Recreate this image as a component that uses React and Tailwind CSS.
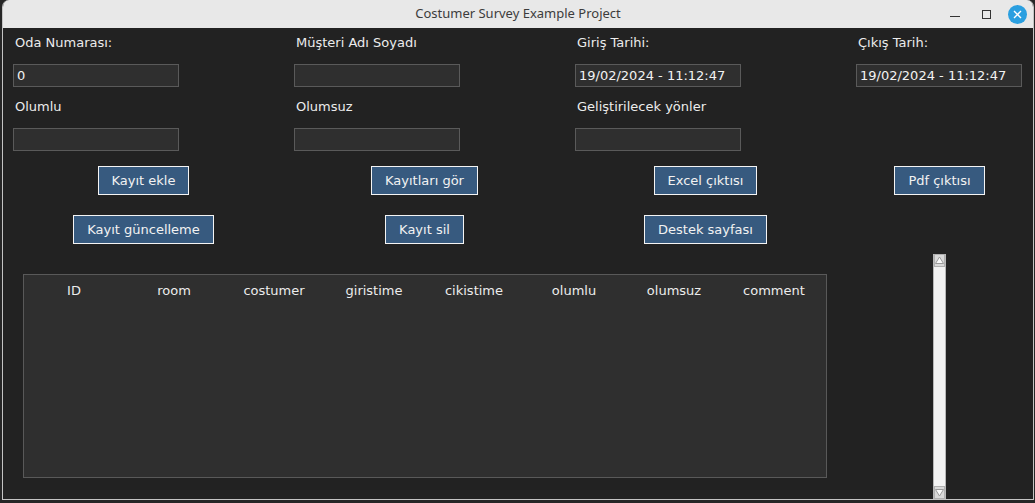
const FONT = { fontFamily: '"DejaVu Sans", sans-serif' };

const COLUMNS = ["ID", "room", "costumer", "giristime", "cikistime", "olumlu", "olumsuz", "comment"];

const Label = ({ children }) => (
  <div className="h-[30px] pl-[12px] flex items-center text-[13px] text-[#ececec]">{children}</div>
);

const Field = ({ value }) => (
  <div className="pl-[10px]">
    <div className="w-[166px] h-[23px] border border-[#5a5a5a] bg-[#2f2f2f] px-[3px] flex items-center text-[13px] text-[#f2f2f2]">
      {value}
    </div>
  </div>
);

const Btn = ({ children }) => (
  <div className="flex justify-center">
    <div className="h-[29px] px-[13px] border border-[#f4f4f4] bg-[#375a7f] flex items-center text-[13px] text-[#f2f2f2]">
      {children}
    </div>
  </div>
);

const Row = ({ children, className = "" }) => (
  <div className={"grid grid-cols-[281px_281px_281px_1fr] " + className}>{children}</div>
);

const ScrollArrow = ({ down }) => (
  <div className="w-full h-[13px] bg-[#d9d9d9] border border-[#b0b0b0] flex items-center justify-center">
    <svg width="9" height="9" viewBox="0 0 9 9">
      <polygon
        points={down ? "0.5,1.5 8.5,1.5 4.5,8" : "4.5,1 8.5,7.5 0.5,7.5"}
        fill="#fafafa"
        stroke="#9a9a9a"
        strokeWidth="1"
      />
    </svg>
  </div>
);

export default function App() {
  return (
    <div className="w-[1035px] h-[503px] bg-[#262626] pl-[2px] overflow-hidden" style={FONT}>
      <div className="w-[1032px] h-[500px] flex flex-col border-x border-b border-[#c4c4c4] bg-[#222222] rounded-t-[7px] overflow-hidden">
        {/* title bar */}
        <div className="h-[28px] shrink-0 bg-[#e8e8e8] flex items-center relative">
          <div
            className="absolute inset-0 flex items-center justify-center text-[13px] text-[#3c3c3c]"
            style={{ fontFamily: '"Noto Sans", sans-serif' }}
          >
            Costumer Survey Example Project
          </div>
          <div className="ml-auto flex items-center relative">
            <div className="w-[10px] h-[1px] bg-[#333] mt-[5px] mr-[22px]" />
            <div className="w-[9px] h-[9px] border border-[#333] mr-[17px]" />
            <div className="w-[19px] h-[19px] rounded-full bg-[#2a9fe0] flex items-center justify-center mr-[6px]">
              <svg width="9" height="9" viewBox="0 0 9 9">
                <path d="M1 1 L8 8 M8 1 L1 8" stroke="#fff" strokeWidth="1.4" />
              </svg>
            </div>
          </div>
        </div>

        {/* form */}
        <Row>
          <Label>Oda Numarası:</Label>
          <Label>Müşteri Adı Soyadı</Label>
          <Label>Giriş Tarihi:</Label>
          <Label>Çıkış Tarih:</Label>
        </Row>
        <Row className="mt-[6px]">
          <Field value="0" />
          <Field />
          <Field value="19/02/2024 - 11:12:47" />
          <Field value="19/02/2024 - 11:12:47" />
        </Row>
        <Row className="mt-[5px]">
          <Label>Olumlu</Label>
          <Label>Olumsuz</Label>
          <Label>Geliştirilecek yönler</Label>
          <div />
        </Row>
        <Row className="mt-[6px]">
          <Field />
          <Field />
          <Field />
          <div />
        </Row>

        {/* buttons */}
        <Row className="mt-[15px]">
          <Btn>Kayıt ekle</Btn>
          <Btn>Kayıtları gör</Btn>
          <Btn>Excel çıktısı</Btn>
          <Btn>Pdf çıktısı</Btn>
        </Row>
        <Row className="mt-[20px]">
          <Btn>Kayıt güncelleme</Btn>
          <Btn>Kayıt sil</Btn>
          <Btn>Destek sayfası</Btn>
          <div />
        </Row>

        {/* records table */}
        <div className="mt-[10px] h-[245px] flex pl-[20px]">
          <div className="mt-[20px] w-[804px] h-[204px] border border-[#595959] bg-[#2f2f2f]">
            <div className="h-[32px] flex">
              {COLUMNS.map((col) => (
                <div key={col} className="w-[100px] flex items-center justify-center text-[13px] text-[#ececec]">
                  {col}
                </div>
              ))}
            </div>
          </div>
          <div className="ml-[106px] w-[13px] h-full flex flex-col bg-[#f3f3f3] border-x border-[#b8b8b8]">
            <ScrollArrow />
            <div className="flex-1" />
            <ScrollArrow down />
          </div>
        </div>
      </div>
    </div>
  );
}
